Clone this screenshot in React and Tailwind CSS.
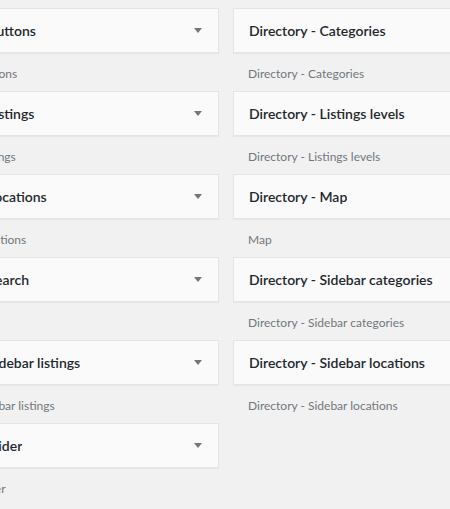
const leftWidgets = [
  { title: "Directory - Buttons", desc: "Directory - Buttons" },
  { title: "Directory - Listings", desc: "Directory - Listings" },
  { title: "Directory - Locations", desc: "Directory - Locations" },
  { title: "Directory - Search", desc: "Search" },
  { title: "Directory - Sidebar listings", desc: "Directory - Sidebar listings" },
  { title: "Directory - Slider", desc: "Directory - Slider" },
];

const rightWidgets = [
  { title: "Directory - Categories", desc: "Directory - Categories" },
  { title: "Directory - Listings levels", desc: "Directory - Listings levels" },
  { title: "Directory - Map", desc: "Map" },
  { title: "Directory - Sidebar categories", desc: "Directory - Sidebar categories" },
  { title: "Directory - Sidebar locations", desc: "Directory - Sidebar locations" },
];

function Widget({ title, desc }) {
  return (
    <div>
      <div className="flex h-[45px] items-center justify-between border border-[#e5e5e5] bg-[#fafafa] pl-[15px] pr-[16px] shadow-[0_1px_1px_rgba(0,0,0,0.04)]">
        <h3 className="truncate text-[14px] font-semibold leading-none text-[#23282d]">{title}</h3>
        <svg width="8" height="5" viewBox="0 0 8 5" className="shrink-0">
          <path d="M0 0h8L4 5z" fill="#72777c" />
        </svg>
      </div>
      <p className="h-[38px] px-[15px] pt-[12px] text-[12px] leading-[18px] text-[#72777c]">{desc}</p>
    </div>
  );
}

export default function App() {
  return (
    <div
      className="h-[509px] w-full overflow-hidden bg-[#f1f1f1]"
      style={{ fontFamily: 'Lato, "Open Sans", sans-serif' }}
    >
      <div className="ml-[-99px] flex gap-[14px] pt-2">
        <div className="w-[318px] shrink-0">
          {leftWidgets.map((w) => (
            <Widget key={w.title} {...w} />
          ))}
        </div>
        <div className="w-[315px] shrink-0">
          {rightWidgets.map((w) => (
            <Widget key={w.title} {...w} />
          ))}
        </div>
      </div>
    </div>
  );
}
